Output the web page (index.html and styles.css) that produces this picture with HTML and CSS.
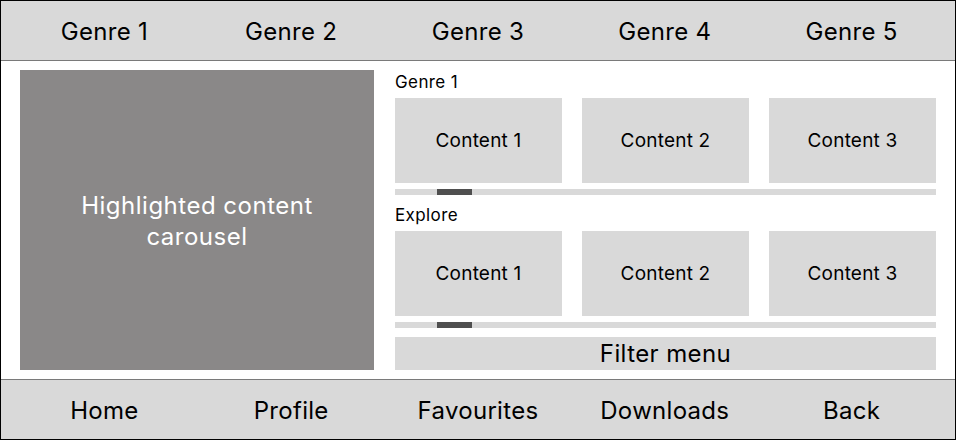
FILE: index.html
```html
<!DOCTYPE html>
<html>
<head>
<meta charset="utf-8">
<link rel="stylesheet" href="styles.css">
</head>
<body>
<div class="frame">
  <nav class="bar top">
    <div class="item">Genre 1</div>
    <div class="item">Genre 2</div>
    <div class="item">Genre 3</div>
    <div class="item">Genre 4</div>
    <div class="item">Genre 5</div>
  </nav>
  <main class="main">
    <div class="carousel">Highlighted content<br>carousel</div>
    <div class="side">
      <div class="label">Genre 1</div>
      <div class="row">
        <div class="card">Content 1</div>
        <div class="card">Content 2</div>
        <div class="card">Content 3</div>
      </div>
      <div class="scroll"><div class="thumb"></div></div>
      <div class="label second">Explore</div>
      <div class="row">
        <div class="card">Content 1</div>
        <div class="card">Content 2</div>
        <div class="card">Content 3</div>
      </div>
      <div class="scroll"><div class="thumb"></div></div>
      <div class="filter">Filter menu</div>
    </div>
  </main>
  <nav class="bar bottom">
    <div class="item">Home</div>
    <div class="item">Profile</div>
    <div class="item">Favourites</div>
    <div class="item">Downloads</div>
    <div class="item">Back</div>
  </nav>
</div>
</body>
</html>
```
FILE: styles.css
```css
* { box-sizing: border-box; }
html, body { margin: 0; padding: 0; background: #fff; }
body { font-family: Inter, "Noto Sans", sans-serif; color: #000; }
.frame {
  width: 956px;
  height: 440px;
  border: 1px solid #000;
  display: flex;
  flex-direction: column;
}
.bar {
  background: #d9d9d9;
  display: grid;
  grid-template-columns: repeat(5, 1fr);
  padding: 2px 10px 0 10px;
  align-items: center;
  font-size: 24px;
  letter-spacing: 0.3px;
}
.bar .item { text-align: center; }
.top { height: 60px; border-bottom: 1px solid #7a7a7a; }
.bottom { height: 60px; border-top: 1px solid #7a7a7a; }
.main {
  flex: 1;
  display: flex;
  gap: 21px;
  padding: 9px 19px 9px 19px;
}
.carousel {
  width: 354px;
  height: 300px;
  background: #8a8888;
  color: #fff;
  font-size: 24px;
  letter-spacing: 0.5px;
  line-height: 31px;
  padding-top: 2px;
  display: flex;
  align-items: center;
  justify-content: center;
  text-align: center;
}
.side { flex: 1; display: flex; flex-direction: column; }
.label { font-size: 17px; letter-spacing: 0.4px; line-height: 24px; margin-bottom: 4px; }
.label.second { margin-top: 8px; }
.row { display: flex; gap: 20px; }
.card {
  flex: 1;
  height: 85px;
  background: #d9d9d9;
  display: flex;
  align-items: center;
  justify-content: center;
  font-size: 19px;
  letter-spacing: 0.2px;
}
.scroll {
  margin-top: 6px;
  height: 6px;
  background: #d9d9d9;
  padding-left: 42px;
}
.thumb { width: 35px; height: 6px; background: #4f4f4f; }
.filter {
  margin-top: 9px;
  height: 33px;
  background: #d9d9d9;
  display: flex;
  align-items: center;
  justify-content: center;
  font-size: 24px;
  letter-spacing: 0.4px;
}
```
